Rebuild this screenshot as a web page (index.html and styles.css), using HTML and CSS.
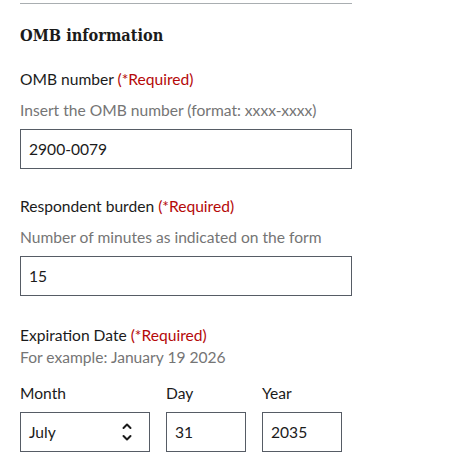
FILE: index.html
```html
<!DOCTYPE html>
<html lang="en">
<head>
<meta charset="utf-8">
<title>OMB information</title>
<link rel="stylesheet" href="styles.css">
</head>
<body>
<div class="page">
  <hr class="rule">
  <h2 class="heading">OMB information</h2>

  <div class="field">
    <label class="label" for="omb">OMB number <span class="req">(*Required)</span></label>
    <div class="hint">Insert the OMB number (format: xxxx-xxxx)</div>
    <input class="input" id="omb" type="text" value="2900-0079">
  </div>

  <div class="field">
    <label class="label" for="burden">Respondent burden <span class="req">(*Required)</span></label>
    <div class="hint">Number of minutes as indicated on the form</div>
    <input class="input" id="burden" type="text" value="15">
  </div>

  <fieldset class="date">
    <legend class="label legend">Expiration Date <span class="req">(*Required)</span></legend>
    <div class="hint hint-tight">For example: January 19 2026</div>
    <div class="date-row">
      <div class="date-part">
        <label class="label" for="month">Month</label>
        <div class="select">
          <span>July</span>
          <svg class="arrows" width="12" height="22" viewBox="0 0 12 22" aria-hidden="true">
            <path d="M2.5 7 L6 3.5 L9.5 7" fill="none" stroke="#1b1b1b" stroke-width="2" stroke-linecap="round" stroke-linejoin="round"/>
            <path d="M2.5 15 L6 18.5 L9.5 15" fill="none" stroke="#1b1b1b" stroke-width="2" stroke-linecap="round" stroke-linejoin="round"/>
          </svg>
        </div>
      </div>
      <div class="date-part">
        <label class="label" for="day">Day</label>
        <input class="input short" id="day" type="text" value="31">
      </div>
      <div class="date-part">
        <label class="label" for="year">Year</label>
        <input class="input short" id="year" type="text" value="2035">
      </div>
    </div>
  </fieldset>
</div>
</body>
</html>
```

FILE: styles.css
```css
* { box-sizing: border-box; }
html, body { margin: 0; padding: 0; background: #fff; }
body {
  font-family: "Lato", "Open Sans", sans-serif;
  font-size: 15.6px;
  color: #1b1b1b;
}
.page {
  padding: 3px 0 0 20px;
  width: 352px;
}
.rule {
  margin: 0;
  border: 0;
  border-top: 1px solid #a9aeb1;
}
.heading {
  margin: 21px 0 0 0;
  font-family: "DejaVu Serif Condensed", "DejaVu Serif", serif;
  font-weight: bold;
  font-size: 16.2px;
  line-height: 22px;
}
.field { display: flex; flex-direction: column; }
.label {
  display: block;
  line-height: 22px;
  margin-top: 21px;
}
.field + .field .label { margin-top: 26px; }
.req { color: #b50909; }
.hint {
  color: #757575;
  line-height: 22px;
  margin-top: 9px;
}
.input {
  display: block;
  margin: 8px 0 0 0;
  width: 332px;
  height: 40px;
  border: 1px solid #565c65;
  border-radius: 0;
  padding: 0 8px;
  font-family: inherit;
  font-size: 15.6px;
  color: #1b1b1b;
  background: #fff;
  outline: none;
}
.date {
  border: 0;
  margin: 28px 0 0 0;
  padding: 0;
  min-width: 0;
}
.legend { padding: 0; margin: 0; float: left; width: 100%; }
.hint-tight { margin-top: 0; clear: both; }
.date-row {
  display: flex;
  gap: 16px;
  margin-top: 14px;
}
.date-part .label { margin-top: 0; }
.select {
  margin-top: 8px;
  width: 130px;
  height: 40px;
  border: 1px solid #565c65;
  padding: 0 8px;
  display: flex;
  align-items: center;
  justify-content: space-between;
}
.arrows { margin-right: 8px; }
.input.short {
  margin-top: 8px;
  width: 80px;
}
```
